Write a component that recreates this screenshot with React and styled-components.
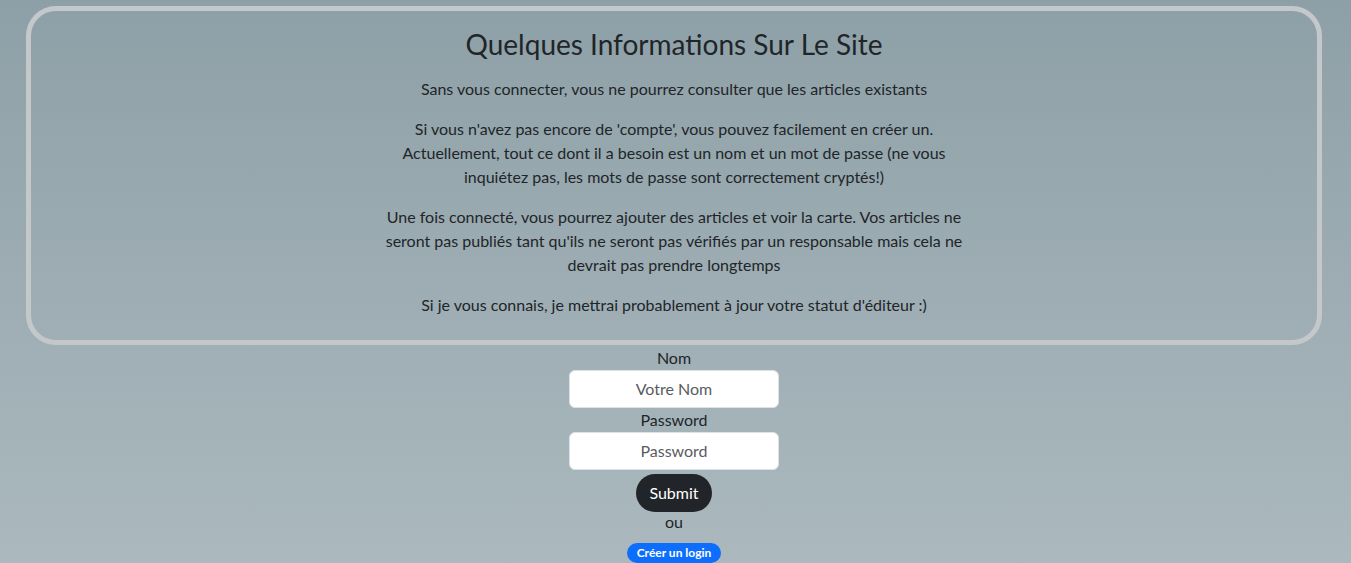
import React from 'react';
import styled, { createGlobalStyle } from 'styled-components';

const GlobalStyle = createGlobalStyle`
    html, body {
        margin: 0;
        padding: 0;
    }

    body {
        min-height: 563px;
        font-family: 'Lato', 'Noto Sans', sans-serif;
        font-size: 16px;
        line-height: 1.5;
        color: #212529;
        background: linear-gradient(to bottom, #8ea0a7 0%, #abb9be 100%);
    }
`;

const App = () => (
    <>
        <GlobalStyle />
        <Page>
            <InfoBox>
                <Title>Quelques Informations Sur Le Site</Title>
                <Text>Sans vous connecter, vous ne pourrez consulter que les articles existants</Text>
                <Text>
                    Si vous n'avez pas encore de 'compte', vous pouvez facilement en créer un.
                    Actuellement, tout ce dont il a besoin est un nom et un mot de passe (ne vous
                    inquiétez pas, les mots de passe sont correctement cryptés!)
                </Text>
                <Text>
                    Une fois connecté, vous pourrez ajouter des articles et voir la carte. Vos articles ne
                    seront pas publiés tant qu'ils ne seront pas vérifiés par un responsable mais cela ne
                    devrait pas prendre longtemps
                </Text>
                <Text>Si je vous connais, je mettrai probablement à jour votre statut d'éditeur :)</Text>
            </InfoBox>

            <LoginForm onSubmit={(e) => e.preventDefault()}>
                <Label htmlFor='nom'>Nom</Label>
                <Input id='nom' type='text' placeholder='Votre Nom' />
                <Label htmlFor='password'>Password</Label>
                <Input id='password' type='password' placeholder='Password' />
                <SubmitButton type='submit'>Submit</SubmitButton>
                <Or>ou</Or>
                <Badge href='#'>Créer un login</Badge>
            </LoginForm>
        </Page>
    </>
);

export default App;

const Page = styled.div`
    display: flex;
    flex-direction: column;
    padding: 6px 29px 0 26px;
`;

const InfoBox = styled.section`
    border: 5px solid #c5c8cb;
    border-radius: 30px;
    padding: 17px 16px 7px;
    text-align: center;
`;

const Title = styled.h3`
    margin: 0 0 15px;
    font-size: 28px;
    font-weight: 400;
    line-height: 1.2;
`;

const Text = styled.p`
    max-width: 600px;
    margin: 0 auto 16px;
    line-height: 24px;
`;

const LoginForm = styled.form`
    display: flex;
    flex-direction: column;
    align-items: center;
    padding-top: 1px;
`;

const Label = styled.label`
    line-height: 24px;
`;

const Input = styled.input`
    box-sizing: border-box;
    width: 210px;
    height: 38px;
    padding: 6px 12px;
    border: 1px solid #dee2e6;
    border-radius: 6px;
    background: #fff;
    font-family: inherit;
    font-size: 16px;
    color: #212529;
    text-align: center;

    &::placeholder {
        color: #595c5f;
    }
`;

const SubmitButton = styled.button`
    height: 38px;
    margin-top: 4px;
    padding: 6px 13px;
    border: 0;
    border-radius: 19px;
    background: #212529;
    color: #fff;
    font-family: inherit;
    font-size: 16px;
    cursor: pointer;
`;

const Or = styled.span`
    line-height: 19px;
    margin-bottom: 12px;
`;

const Badge = styled.a`
    display: inline-block;
    padding: 4px 10px;
    border-radius: 10px;
    background: #0d6efd;
    color: #fff;
    font-size: 12px;
    font-weight: 700;
    line-height: 1;
    text-decoration: none;
`;
